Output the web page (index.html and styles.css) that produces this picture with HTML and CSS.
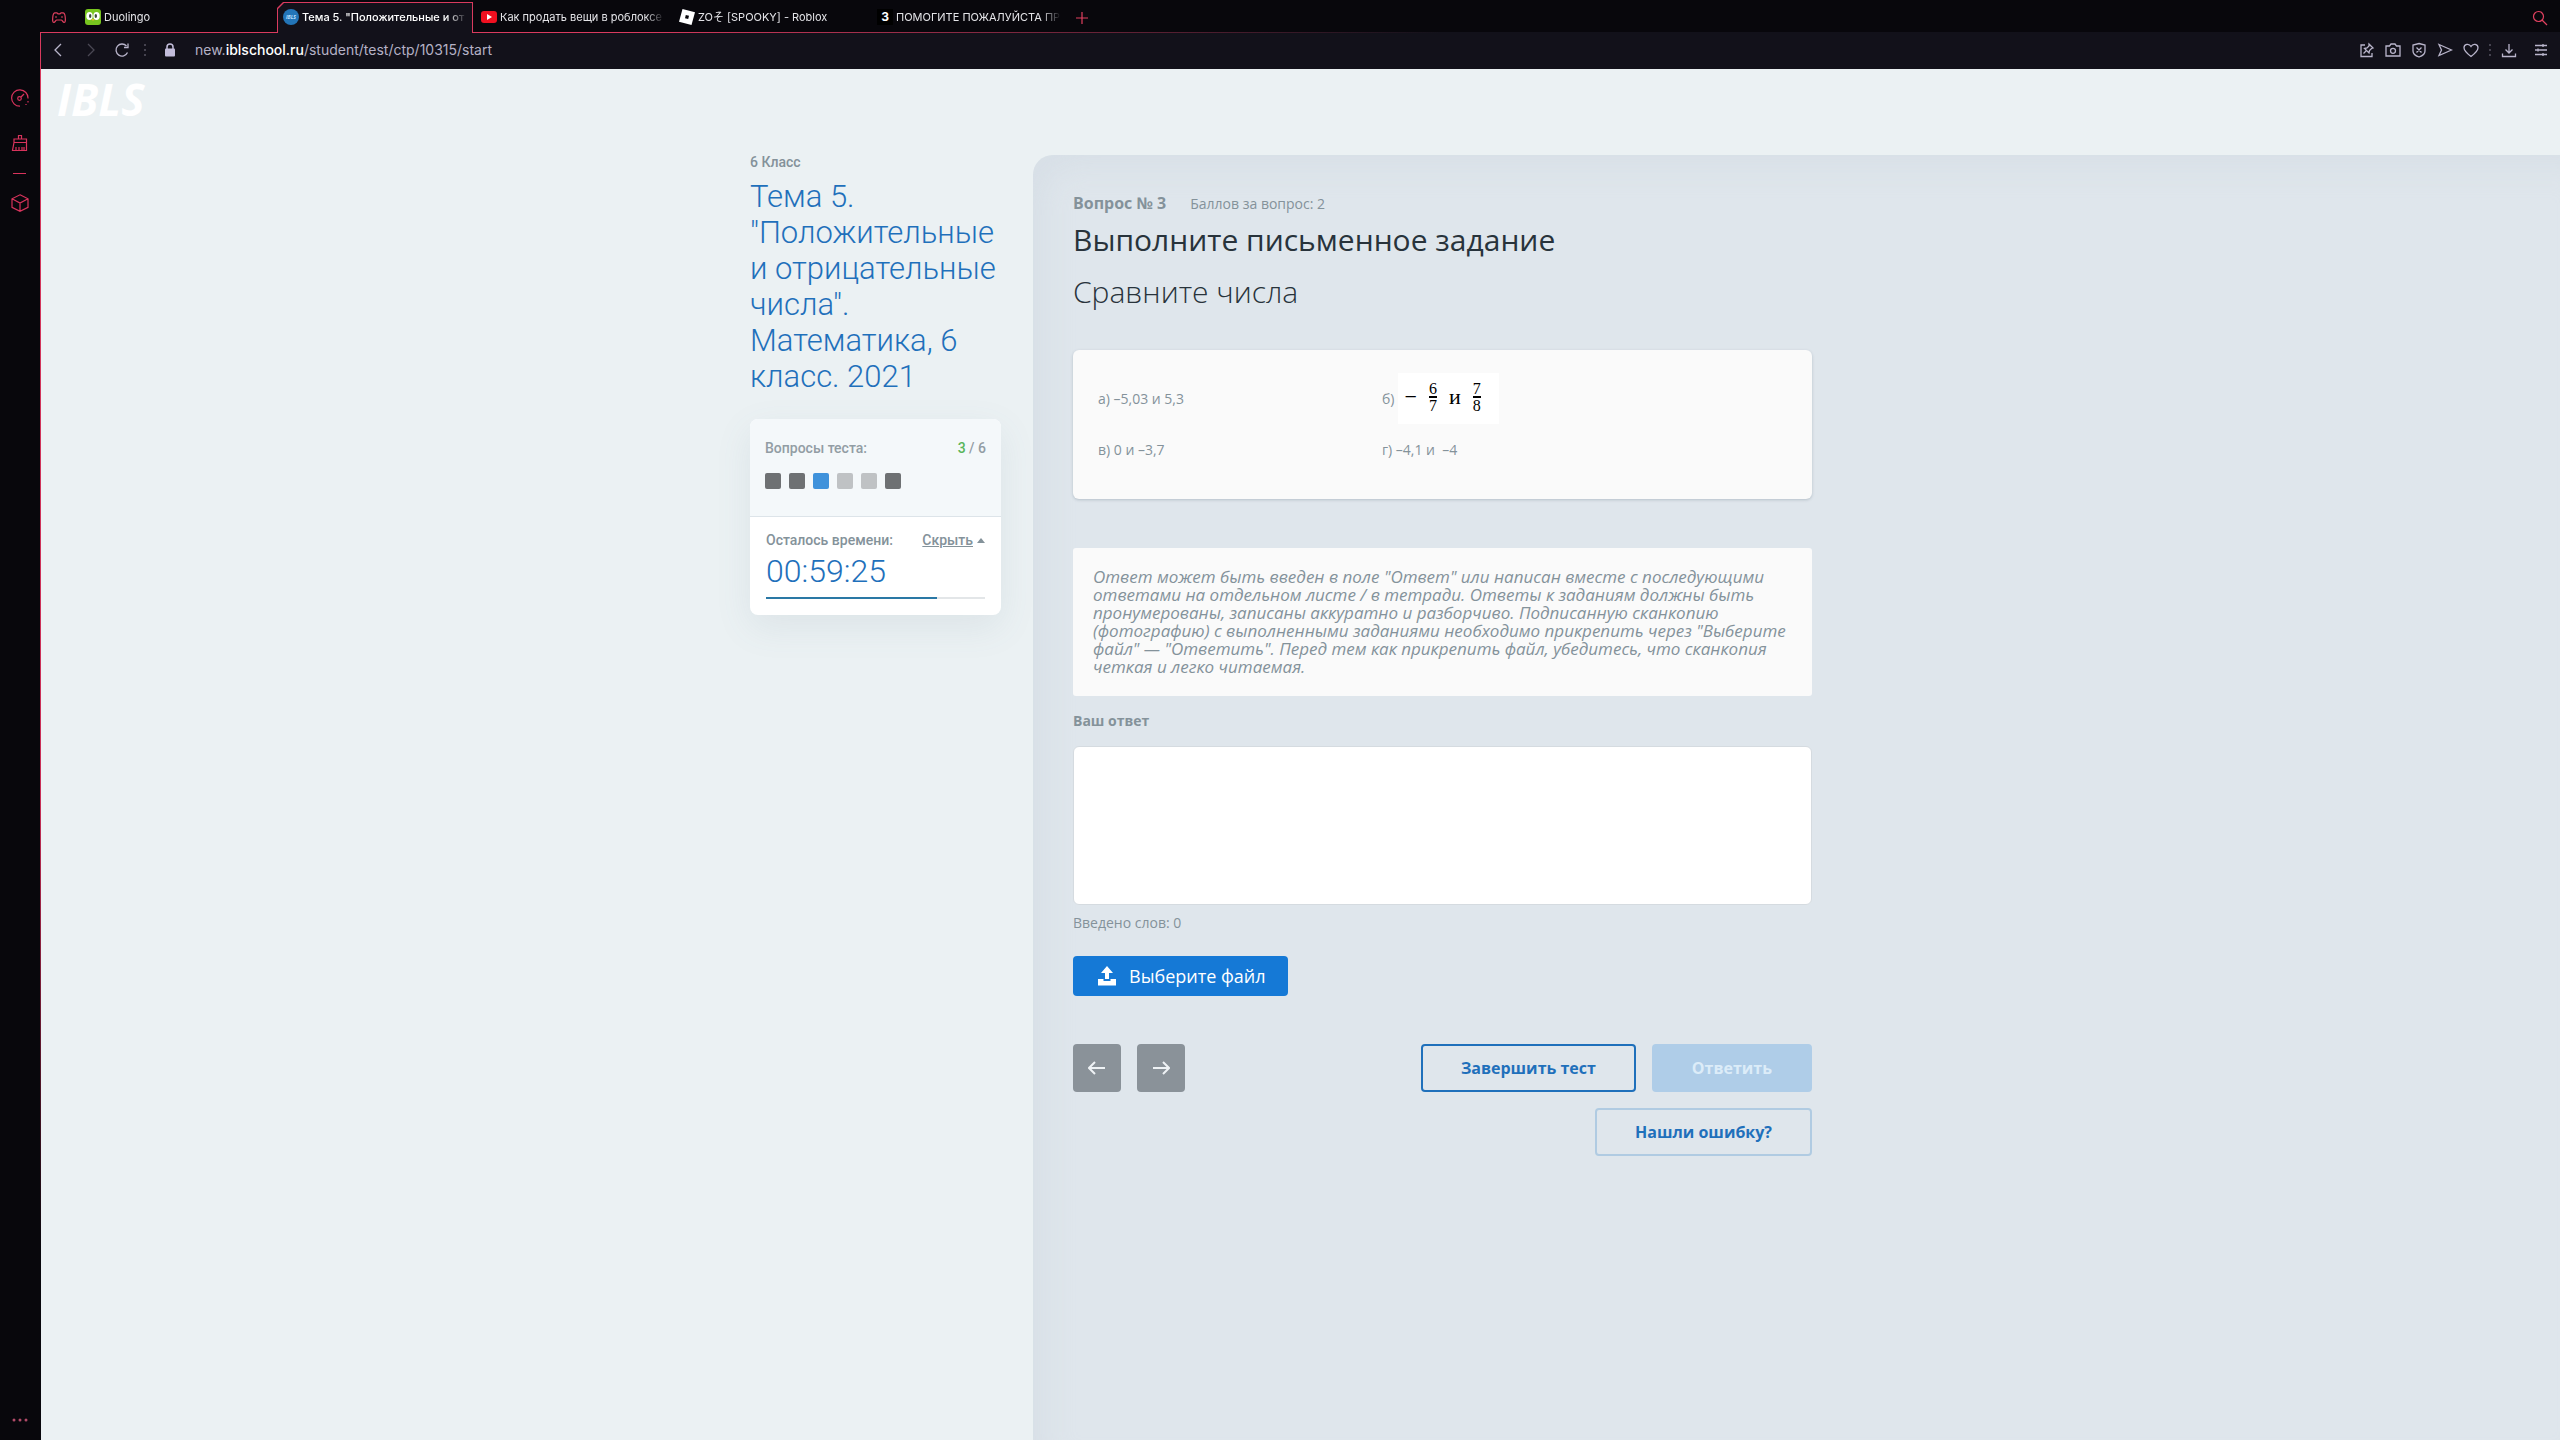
FILE: index.html
```html
<!DOCTYPE html>
<html lang="ru">
<head>
<meta charset="utf-8">
<title>Тема 5. "Положительные и отрицательные числа"</title>
<link rel="stylesheet" href="styles.css">
</head>
<body>
<nav class="rail" aria-label="Боковая панель">
  <button class="rail-btn" aria-label="GX Control"><svg width="18" height="18" viewBox="0 0 18 18"><path d="M9 17.200A8.200 8.200 0 1 1 17 9.500M17 12v1.500M15 15v1"/><circle cx="8.500" cy="9.500" r="1.800"/><path d="M10 8l3-3"/></svg></button>
  <button class="rail-btn" aria-label="GX Cleaner"><svg width="18" height="18" viewBox="0 0 18 18"><path d="M7.500 5V1.500h3V5M3 5h12.500v3.500H3zM3 8.500L1.500 16.500h14V8.500M5 16v-3M8 16v-3M11 16v-3M13 16v-3"/></svg></button>
  <span class="rail-line"></span>
  <button class="rail-btn" aria-label="Расширения"><svg width="18" height="18" viewBox="0 0 18 18"><path d="M9 .8L17 4.800v8.500L9 17.300 1 13.300V4.800zM1 4.800l8 4.200 8-4.200M9 9v8"/></svg></button>
  <button class="rail-btn rail-more" aria-label="Ещё"><svg width="18" height="6" viewBox="0 0 18 6"><circle cx="3" cy="3" r="1.500"/><circle cx="9" cy="3" r="1.500"/><circle cx="15" cy="3" r="1.500"/></svg></button>
</nav>
<div class="window">
  <header class="chrome">
    <div class="tabs">
      <button class="corner" aria-label="GX Corner"><svg width="14" height="12" viewBox="0 0 14 12"><path d="M3 .8h2l1 1h2l1-1h2c1 0 2 1.500 2.200 4.200.3 3 .3 5.500-1 5.500-1.500 0-1.700-2.500-3-2.500H4.800c-1.300 0-1.500 2.500-3 2.500-1.300 0-1.300-2.500-1-5.500C1 2.300 2 .8 3 .8zM3 5h2M9 5h2"/></svg></button>
      <button class="tab"><svg class="fav" width="16" height="16" viewBox="0 0 16 16"><rect width="16" height="16" rx="3" fill="#78c51f"/><ellipse cx="4.500" cy="7" rx="3.200" ry="4" fill="#fff"/><ellipse cx="11.500" cy="7" rx="3.200" ry="4" fill="#fff"/><ellipse cx="5.200" cy="7" rx="1.200" ry="1.900" fill="#3c4b3a"/><ellipse cx="10.800" cy="7" rx="1.200" ry="1.900" fill="#3c4b3a"/><path d="M6.500 10h3L8 12z" fill="#f7b52c"/></svg><span class="tab-name">Duolingo</span></button>
      <button class="tab active"><svg class="fav" width="16" height="16" viewBox="0 0 16 16"><circle cx="8" cy="8" r="8" fill="#2375b8"/><text x="8" y="10" class="fav-ibls">IBLS</text></svg><span class="tab-name">Тема 5. "Положительные и от</span></button>
      <button class="tab"><svg class="fav" width="16" height="16" viewBox="0 0 16 16"><rect y="2" width="16" height="12" rx="3" fill="#f01020"/><path d="M6 5l5 3-5 3z" fill="#fff"/></svg><span class="tab-name">Как продать вещи в роблоксе</span></button>
      <button class="tab"><svg class="fav" width="16" height="16" viewBox="0 0 16 16"><path fill="#fff" fill-rule="evenodd" d="M3.500 0L16 3.200 12.500 16 0 12.800zM6.800 6L6 9.200l3.200.8.8-3.200z"/></svg><span class="tab-name">ZOそ [SPOOKY] - Roblox</span></button>
      <button class="tab"><svg class="fav" width="16" height="16" viewBox="0 0 16 16"><rect width="16" height="16" fill="#000"/><text x="8" y="12" class="fav-z">З</text></svg><span class="tab-name">ПОМОГИТЕ ПОЖАЛУЙСТА ПР</span></button>
      <button class="new-tab" aria-label="Новая вкладка"><svg width="12" height="12" viewBox="0 0 12 12"><path d="M6 0v12M0 6h12"/></svg></button>
      <button class="find" aria-label="Поиск"><svg width="16" height="16" viewBox="0 0 16 16"><circle cx="6.500" cy="6.500" r="5"/><path d="M10 10l5 5"/></svg></button>
    </div>
    <div class="bar">
      <button class="bar-btn nav-back" aria-label="Назад"><svg width="16" height="16" viewBox="0 0 16 16"><path d="M11 2L5 8l6 6"/></svg></button>
      <button class="bar-btn nav-next" aria-label="Вперёд"><svg width="16" height="16" viewBox="0 0 16 16"><path d="M5 2l6 6-6 6"/></svg></button>
      <button class="bar-btn" aria-label="Обновить"><svg width="16" height="16" viewBox="0 0 16 16"><path d="M13.500 10.500A6 6 0 1 1 12.500 4M14 1.500V5.500h-4"/></svg></button>
      <span class="dots"></span>
      <svg class="lock" width="12" height="14" viewBox="0 0 12 14"><path d="M3 6V4a3 3 0 0 1 6 0v2" fill="none" stroke="#c3bddb" stroke-width="1.500"/><rect x="1" y="5.500" width="10" height="8" rx="1" fill="#c3bddb"/></svg>
      <div class="url">new.<b>iblschool.ru</b>/student/test/ctp/10315/start</div>
      <div class="actions">
        <button class="bar-btn" aria-label="Закрепить"><svg width="16" height="16" viewBox="0 0 16 16"><path d="M6 3H2v11.500h11V11M10 2l4 4-1.500.5-2 2-.5 2.500-4.500-4.500L8 6l2-2zM7.500 8.500L4.500 11.500"/></svg></button>
        <button class="bar-btn" aria-label="Снимок"><svg width="16" height="16" viewBox="0 0 16 16"><path d="M1 4h3.500L6 2h4l1.500 2H15v10H1z"/><circle cx="8" cy="8.800" r="2.500"/></svg></button>
        <button class="bar-btn" aria-label="Блокировка рекламы"><svg width="16" height="16" viewBox="0 0 16 16"><path d="M8 1.500L14 3v6c0 3-3 5-6 6-3-1-6-3-6-6V3zM5.500 5.500l5 5M10.500 5.500l-5 5"/></svg></button>
        <button class="bar-btn" aria-label="Отправить"><svg width="16" height="16" viewBox="0 0 16 16"><path d="M2 2.500L14.500 8 2 13.500 4.500 8z"/></svg></button>
        <button class="bar-btn" aria-label="В закладки"><svg width="16" height="16" viewBox="0 0 16 16"><path d="M8 14.500C4 11.500 1 9 1 5.800 1 2 6 1 8 4.500 10 1 15 2 15 5.800 15 9 12 11.500 8 14.500z"/></svg></button>
        <span class="dots"></span>
        <button class="bar-btn" aria-label="Загрузки"><svg width="16" height="16" viewBox="0 0 16 16"><path d="M8 2v9M4.500 7.500L8 11l3.500-3.500M1.500 11.500v3h13v-3"/></svg></button>
        <button class="bar-btn menu" aria-label="Настройки"><svg width="16" height="16" viewBox="0 0 16 16"><path d="M2 3.500h12M2 8h12M2 12.500h12M10 2v3M5 6.500v3M10 11v3"/></svg></button>
      </div>
    </div>
  </header>
  <main class="page">
    <a class="logo" href="#">IBLS</a>
    <div class="columns">
      <aside class="side">
        <p class="grade">6 Класс</p>
        <h1 class="topic">Тема 5.<br>"Положительные и отрицательные числа". Математика, 6 класс. 2021</h1>
        <section class="status">
          <div class="progress">
            <div class="row"><span>Вопросы теста:</span><span><b class="now">3</b> / 6</span></div>
            <div class="steps"><i class="step done"></i><i class="step done"></i><i class="step current"></i><i class="step"></i><i class="step"></i><i class="step done"></i></div>
          </div>
          <div class="timer">
            <div class="row"><span>Осталось времени:</span><a class="hide" href="#">Скрыть <svg width="8" height="5" viewBox="0 0 8 5"><path d="M0 5l4-5 4 5z"/></svg></a></div>
            <div class="clock">00:59:25</div>
            <div class="track"><div class="fill" style="width:78%"></div></div>
          </div>
        </section>
      </aside>
      <section class="panel">
        <form class="question">
          <div class="meta"><span class="number">Вопрос № 3</span><span class="score">Баллов за вопрос: 2</span></div>
          <h2 class="heading">Выполните письменное задание</h2>
          <p class="task">Сравните числа</p>
          <div class="items">
            <span>а) –5,03 и 5,3</span>
            <span class="with-formula">б) <span class="formula"><span class="minus">−</span><span class="frac"><span>6</span><span>7</span></span><span>и</span><span class="frac"><span>7</span><span>8</span></span></span></span>
            <span>в) 0 и –3,7</span>
            <span>г) –4,1 и &nbsp;–4</span>
          </div>
          <p class="note">Ответ может быть введен в поле "Ответ" или написан вместе с последующими ответами на отдельном листе / в тетради. Ответы к заданиям должны быть пронумерованы, записаны аккуратно и разборчиво. Подписанную сканкопию (фотографию) с выполненными заданиями необходимо прикрепить через "Выберите файл" — "Ответить". Перед тем как прикрепить файл, убедитесь, что сканкопия четкая и легко читаемая.</p>
          <label class="label" for="answer">Ваш ответ</label>
          <textarea class="answer" id="answer"></textarea>
          <p class="count">Введено слов: 0</p>
          <button type="button" class="upload"><svg width="20" height="20" viewBox="0 0 20 20"><path d="M10 0l6 7h-4v6H8V7H4zM1 13h5.500v2h7v-2H19v6.500H1z"/></svg>Выберите файл</button>
          <div class="foot">
            <div class="arrows">
              <button type="button" class="arrow" aria-label="Назад"><svg width="18" height="14" viewBox="0 0 18 14"><path d="M17 7H1M7 1L1 7l6 6"/></svg></button>
              <button type="button" class="arrow" aria-label="Вперёд"><svg width="18" height="14" viewBox="0 0 18 14"><path d="M1 7h16M11 1l6 6-6 6"/></svg></button>
            </div>
            <div class="submit">
              <button type="button" class="btn outline">Завершить тест</button>
              <button type="button" class="btn primary" disabled>Ответить</button>
              <button type="button" class="btn pale">Нашли ошибку?</button>
            </div>
          </div>
        </form>
      </section>
    </div>
  </main>
</div>
</body>
</html>
```
FILE: styles.css
```css
* { box-sizing: border-box; }
body {
  margin: 0;
  min-height: 100vh;
  display: flex;
  background: #08070c;
  font: 14px/20px "Open Sans", "Noto Sans", sans-serif;
  color: #84929a;
}
p, h1, h2 { margin: 0; font-weight: 400; }
button { border: 0; padding: 0; background: none; color: inherit; font: inherit; cursor: pointer; }
svg { display: block; flex: none; }

.rail { flex: none; width: 41px; padding: 89px 2px 17px 0; display: flex; flex-direction: column; align-items: center; background: linear-gradient(transparent 32px, #d93a5e 32px, #c92f57 800px, #08070c 1250px) right top / 1px 100% no-repeat; }
.rail-btn svg { fill: none; stroke: #d8335c; stroke-width: 1.2; }
.rail-btn + .rail-btn { margin-top: 27px; }
.rail-line { width: 13px; height: 1px; margin: 21px 0 20px; background: #d8335c; }
.rail .rail-more { margin-top: auto; }
.rail-more svg { fill: #b04a68; stroke: none; }

.window { flex: 1; min-width: 0; display: flex; flex-direction: column; }
.chrome { font-family: Inter, "Noto Sans CJK JP", sans-serif; }
.tabs { height: 33px; padding: 2px 12px 0 11px; display: flex; background: linear-gradient(90deg, #d93a5e, #d93a5e 600px, #12111a 1400px) left bottom / 100% 1px no-repeat; }
.corner { width: 27px; }
.tabs > .corner svg, .new-tab svg, .find svg { fill: none; stroke: #e0405f; stroke-width: 1.2; }
.tab { position: relative; isolation: isolate; width: 196px; margin-right: 2px; padding: 0 7px 2px 6px; display: flex; align-items: center; gap: 3px; font-size: 11px; line-height: 16px; color: #e4e4e8; }
.tab-name { flex: 1; white-space: nowrap; text-align: left; -webkit-mask: linear-gradient(90deg, #000 145px, transparent 165px); mask: linear-gradient(90deg, #000 145px, transparent 165px); }
.active { color: #fff; font-weight: 500; }
.active::before, .active::after { content: ""; position: absolute; z-index: -2; inset: 0; background: #d93a5e; clip-path: polygon(6px 0, 100% 0, 100% 100%, 0 100%, 0 6px); }
.active::after { z-index: -1; inset: 1px 1px 0; background: #12111a; }
.fav-ibls { font: italic 700 5px "Open Sans", sans-serif; fill: #bfe0ff; text-anchor: middle; }
.fav-z { font: 700 12px Inter, sans-serif; fill: #fff; text-anchor: middle; }
.new-tab { width: 26px; display: flex; align-items: center; justify-content: center; }
.find { margin-left: auto; }
.bar { height: 36px; padding: 0 11px 2px 9px; display: flex; align-items: center; background: #12111a; }
.bar-btn svg { fill: none; stroke: #b9b5cb; stroke-width: 1.3; }
.nav-back { margin-right: 17px; }
.nav-next { margin-right: 15px; }
.nav-next svg { stroke: #4a4854; }
.dots { width: 2px; height: 12px; background: repeating-linear-gradient(#45434f 0 2px, transparent 2px 5px); }
.bar > .dots { margin: 0 18px 0 14px; }
.url { margin-left: 19px; font-size: 14px; color: #b5b1c6; }
.url b { font-weight: 500; color: #fff; }
.actions { margin-left: auto; display: flex; align-items: center; gap: 10px; }
.actions .menu { margin-left: 6px; }

.page { flex: 1; display: flex; flex-direction: column; background: #ebf1f3; }
.logo { align-self: flex-start; height: 86px; padding: 7px 16px; color: #fff; font-size: 44px; line-height: 46px; font-weight: 700; font-style: italic; text-decoration: none; }
.columns { flex: 1; display: grid; grid-template-columns: minmax(24px, 709fr) 283px minmax(0, 1527fr); }
.side { grid-column: 2; padding-right: 32px; font-family: Roboto, sans-serif; }
.grade { font-size: 14px; line-height: 14px; font-weight: 500; }
.topic { margin-top: 10px; color: #1f70bb; font-size: 31px; line-height: 36px; font-weight: 300; }
.status { margin-top: 24px; border-radius: 8px; background: #fff; box-shadow: 0 12px 36px rgba(90, 120, 140, .1); }
.progress { height: 98px; padding: 21px 15px 0; border-bottom: 1px solid #dde4e9; border-radius: 8px 8px 0 0; background: #f4f8fa; }
.row { display: flex; justify-content: space-between; line-height: 16px; font-weight: 500; }
.progress .row { color: #929da4; }
.now { color: #59b559; font-weight: 500; }
.steps { margin-top: 17px; display: flex; gap: 8px; }
.step { width: 16px; height: 16px; border-radius: 2px; background: #bfc2c4; }
.done { background: #6e7173; }
.current { background: #3f92db; }
.timer { padding: 15px 16px 16px; }
.hide { display: flex; align-items: center; gap: 4px; color: inherit; text-decoration: underline; }
.hide svg { fill: #84929a; }
.clock { margin-top: 5px; color: #1f70bb; font-size: 32px; line-height: 36px; font-weight: 300; }
.track { margin-top: 8px; height: 2px; background: #e3e6e8; }
.fill { height: 2px; background: #2a78a5; }

.panel { padding: 38px 40px; border-radius: 20px 0 0; background: #dfe6ec; box-shadow: inset 20px 20px 30px -8px rgba(200, 207, 220, .3); }
.question { max-width: 739px; display: flex; flex-direction: column; }
.meta { display: flex; align-items: baseline; gap: 24px; }
.number { font-size: 16px; font-weight: 700; }
.heading { margin-top: 5px; font-size: 30px; line-height: 42px; color: #28333b; }
.task { margin-top: 10px; font-size: 30px; line-height: 42px; font-weight: 300; color: #28333b; }
.items { margin-top: 37px; height: 149px; padding: 23px 25px; display: grid; grid-template-columns: 284px 1fr; grid-template-rows: 51px 51px; align-items: center; border-radius: 6px; background: #fafafa; box-shadow: 0 1px 3px rgba(60, 80, 100, .25); }
.with-formula { display: flex; align-items: center; gap: 4px; }
.formula { width: 101px; height: 51px; padding: 0 6px 3px; display: flex; align-items: center; gap: 12px; background: #fff; color: #000; font: 22px/20px "Liberation Serif", serif; }
.frac { display: flex; flex-direction: column; text-align: center; font-size: 16px; line-height: 15px; }
.frac span + span { border-top: 2px solid #000; }
.note { margin-top: 49px; padding: 20px; border-radius: 3px; background: #fafafa; font-size: 17px; line-height: 18px; font-style: italic; }
.label { margin-top: 15px; font-weight: 700; }
.answer { margin-top: 15px; height: 159px; border: 1px solid #d5dbe0; border-radius: 6px; background: #fff; resize: none; }
.count { margin-top: 8px; }
.upload { align-self: flex-start; margin-top: 23px; height: 40px; padding: 0 22px 0 24px; display: flex; align-items: center; gap: 12px; border-radius: 4px; background: #1579d6; color: #fff; font-size: 18px; }
.upload svg { fill: #fff; }
.foot { margin-top: 48px; display: flex; justify-content: space-between; }
.arrows { display: flex; gap: 16px; }
.arrow { width: 48px; height: 48px; display: grid; place-items: center; border-radius: 4px; background: #8a9299; }
.arrow svg { fill: none; stroke: #eef2f5; stroke-width: 2; }
.submit { width: 400px; display: flex; flex-wrap: wrap; justify-content: flex-end; gap: 16px; }
.btn { height: 48px; padding: 0 38px; border: 2px solid #1f70bb; border-radius: 4px; color: #1f70bb; font-size: 16px; font-weight: 700; }
.primary { border-color: #afcde8; background: #afcde8; color: #dcecf8; }
.pale { border-color: #b0cbe2; }
```
